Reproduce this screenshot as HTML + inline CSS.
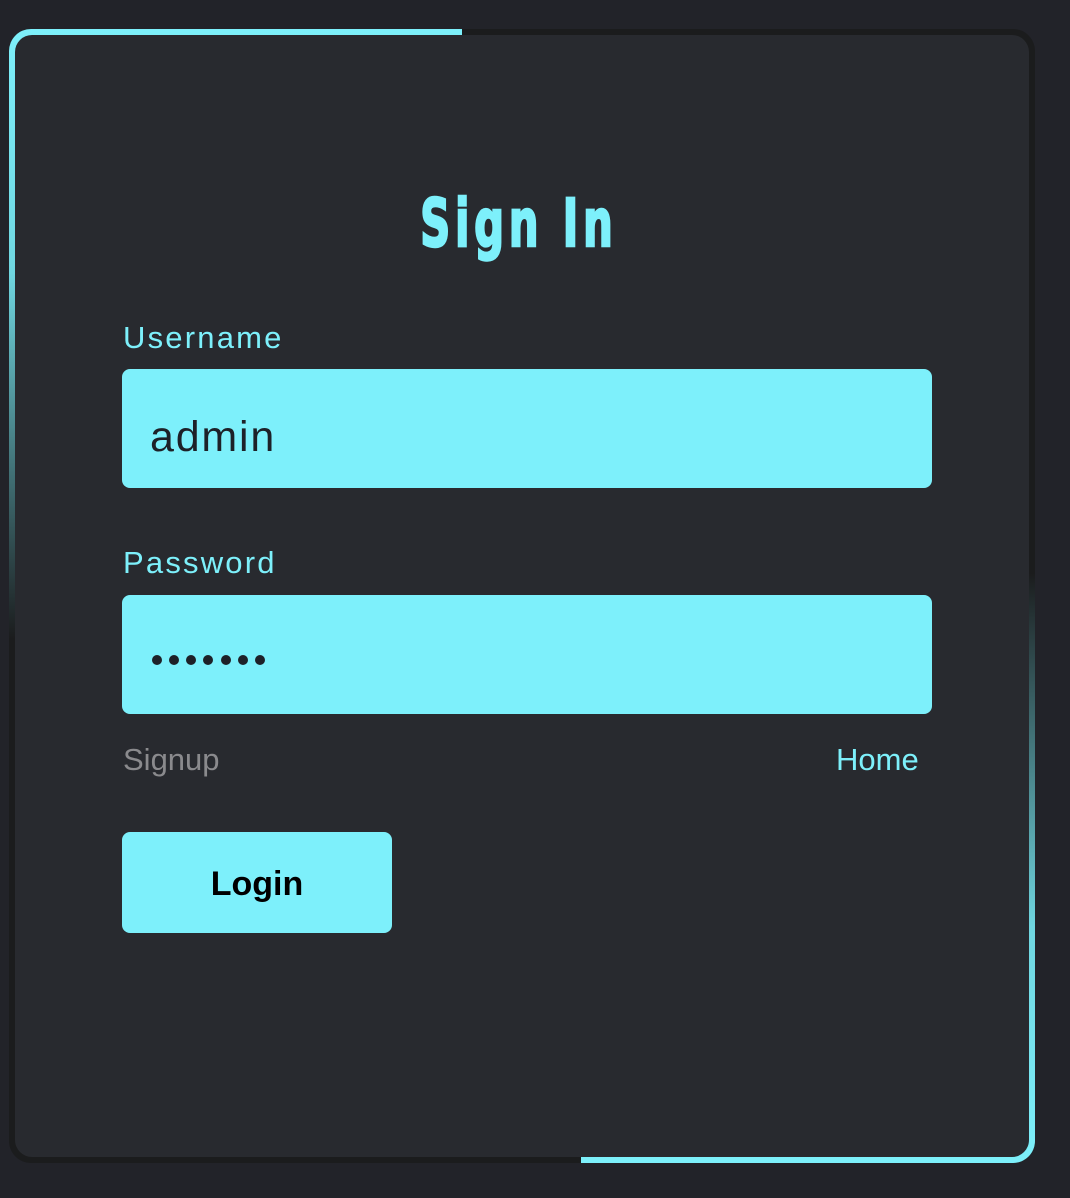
<!DOCTYPE html>
<html><head><style>
html,body{margin:0;padding:0;background:#222329;width:1070px;height:1198px;overflow:hidden;font-family:"Liberation Sans",sans-serif;}
.card{position:absolute;left:9px;top:29px;width:1026px;height:1134px;border-radius:22px;background:#1b1c1d;overflow:hidden;}
.g1{position:absolute;left:0;top:0;width:453px;height:610px;background:linear-gradient(#7df0fb 0%,#6fd6e0 40%,rgba(125,240,251,0) 100%);}
.g2{position:absolute;right:0;bottom:0;width:454px;height:590px;background:linear-gradient(rgba(125,240,251,0) 0%,#6fd6e0 60%,#7df0fb 100%);}
.inner{position:absolute;left:6px;top:6px;right:6px;bottom:6px;border-radius:17px;background:#282a2f;}
.title{position:absolute;left:-16px;width:1070px;top:186px;text-align:center;color:#7df0fb;font-family:"DejaVu Sans Condensed","DejaVu Sans",sans-serif;font-weight:bold;font-size:66px;line-height:76px;letter-spacing:7px;}
.title span{display:inline-block;transform:scaleX(0.7);-webkit-text-stroke:2.5px #7df0fb;}
.lbl{position:absolute;left:123px;color:#7df0fb;font-size:31px;letter-spacing:2.2px;}
.inp{position:absolute;left:122px;width:810px;height:119px;border-radius:8px;background:#7df0fb;}
.val{position:absolute;left:150px;font-size:43px;color:#1d2128;letter-spacing:1.8px;}
.dot{position:absolute;top:655px;width:10px;height:10px;border-radius:50%;background:#1d2128;}
.btn{position:absolute;left:122px;top:832px;width:270px;height:101px;border-radius:8px;background:#7df0fb;color:#000;font-weight:bold;font-size:34px;text-align:center;line-height:105px;}
</style></head><body>
<div class="card"><div class="g1"></div><div class="g2"></div><div class="inner"></div></div>
<div class="title"><span>Sign In</span></div>
<div class="lbl" style="top:320px">Username</div>
<div class="inp" style="top:369px"></div>
<div class="val" style="top:413px">admin</div>
<div class="lbl" style="top:545px">Password</div>
<div class="inp" style="top:595px"></div>
<div class="dot" style="left:152px"></div><div class="dot" style="left:169px"></div><div class="dot" style="left:186px"></div><div class="dot" style="left:203px"></div><div class="dot" style="left:221px"></div><div class="dot" style="left:238px"></div><div class="dot" style="left:255px"></div>
<div style="position:absolute;left:123px;top:742px;font-size:31px;color:#8a8a8d;">Signup</div>
<div style="position:absolute;left:836px;top:742px;font-size:31px;color:#7df0fb;">Home</div>
<div class="btn">Login</div>
</body></html>
